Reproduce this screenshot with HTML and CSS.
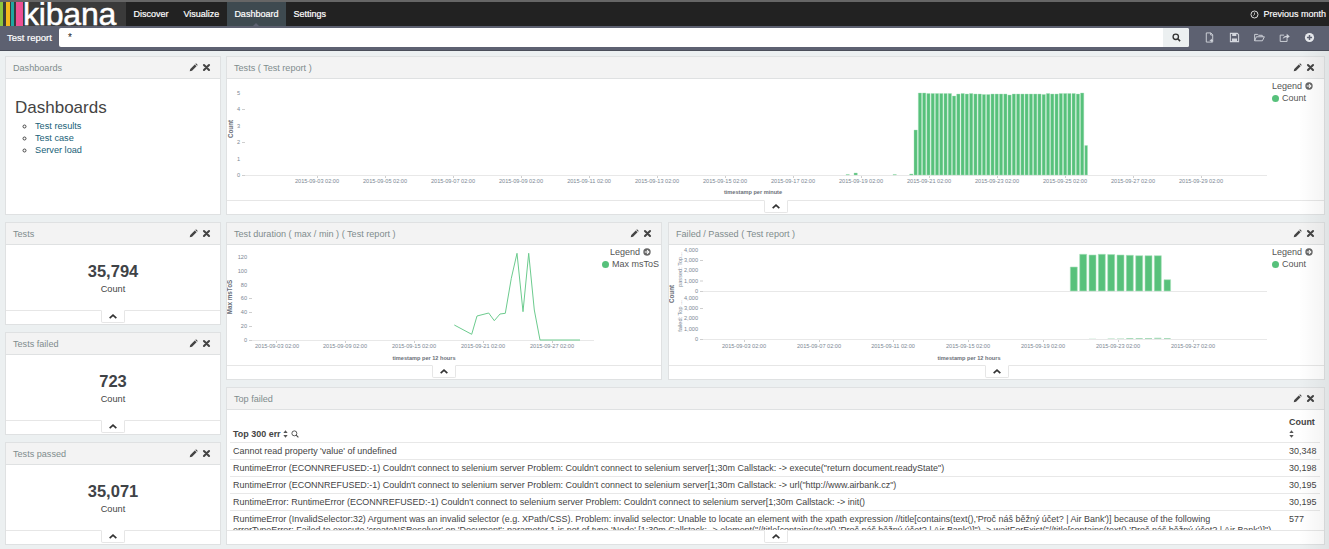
FILE: index.html
```html
<!DOCTYPE html>
<html lang="en">
<head>
<meta charset="utf-8">
<title>Test report - Kibana</title>
<link rel="stylesheet" href="styles.css">
</head>
<body>
<svg class="defs" width="0" height="0">
  <symbol id="pencil" viewBox="0 0 10 10"><path d="M0.8 9.2 1.4 6.6 6.4 1.6 8.4 3.6 3.4 8.6Z M7 1 7.8.3 9.7 2.2 9 3Z" fill="#444"/></symbol>
  <symbol id="times" viewBox="0 0 10 10"><path d="M2.2 2.2 7.800 7.800M7.800 2.200 2.200 7.800" stroke="#444" stroke-width="2.300" stroke-linecap="round"/></symbol>
  <symbol id="chev" viewBox="0 0 12 8"><path d="M2 6 6 2.4 10 6" fill="none" stroke="#333" stroke-width="2"/></symbol>
  <symbol id="legend-arrow" viewBox="0 0 10 10"><circle cx="5" cy="5" r="4.6" fill="#666"/><path d="M2.2 5H7M5 2.8 7.3 5 5 7.2" fill="none" stroke="#fff" stroke-width="1.3"/></symbol>
</svg>

<nav class="nav">
  <div class="logo">
    <span class="stripe s1"></span><span class="stripe s2"></span><span class="stripe s3"></span><span class="stripe s4"></span>
    <span class="wordmark">kibana</span>
  </div>
  <a class="nav-link">Discover</a>
  <a class="nav-link">Visualize</a>
  <a class="nav-link active">Dashboard</a>
  <a class="nav-link">Settings</a>
  <div class="time">
    <svg class="clock" viewBox="0 0 10 10"><circle cx="5" cy="5" r="3.9" fill="none" stroke="#ddd" stroke-width="1.1"/><path d="M5 2.8V5L3.6 6.2" fill="none" stroke="#ddd" stroke-width=".9"/></svg>
    <span>Previous month</span>
  </div>
</nav>

<div class="subbar">
  <span class="dash-name">Test report</span>
  <div class="search">
    <span class="query">*</span>
    <span class="search-btn"><svg class="search-icon" viewBox="0 0 10 10"><circle cx="4.2" cy="4.2" r="3" fill="none" stroke="#333" stroke-width="1.5"/><path d="M6.4 6.4 9 9" stroke="#333" stroke-width="1.8"/></svg></span>
  </div>
  <div class="tools">
    <svg class="tool" viewBox="0 0 12 12"><path d="M2.5 1H7.5L9.5 3V11H2.5Z M7.3 1V3.3H9.5" fill="none" stroke="#d3d6dd" stroke-width="1"/><path d="M8 7.5V11M6.3 9.2H9.8" stroke="#d3d6dd" stroke-width="1"/></svg>
    <svg class="tool" viewBox="0 0 12 12"><path d="M1.5 1.5H9L10.5 3V10.5H1.5Z" fill="none" stroke="#d3d6dd" stroke-width="1.1"/><path d="M3.5 1.5H8V4.4H3.5ZM3.2 7H8.8V10.5H3.2Z" fill="#d3d6dd"/></svg>
    <svg class="tool" viewBox="0 0 12 12"><path d="M.7 9.6V2.6H4L5 3.6H9V5.2M.7 9.6H9.2L11.3 5.2H2.6Z" fill="none" stroke="#d3d6dd" stroke-width="1"/></svg>
    <svg class="tool" viewBox="0 0 12 12"><path d="M8.8 7V10.3H1.3V3.4H5.6" fill="none" stroke="#d3d6dd" stroke-width="1"/><path d="M4 7.6C4.6 5.2 6.5 4 8.4 4V2L11.7 4.8 8.4 7.4V5.6C6.6 5.6 5.2 6.2 4 7.6Z" fill="#d3d6dd"/></svg>
    <svg class="tool" viewBox="0 0 12 12"><circle cx="6" cy="6" r="5" fill="#e6e8ec"/><path d="M6 3.2V8.8M3.2 6H8.8" stroke="#5d6171" stroke-width="1.6"/></svg>
  </div>
</div>

<main class="grid">
  <section class="panel">
    <header class="panel-head"><span>Dashboards</span><span class="acts"><svg class="act"><use href="#pencil"/></svg><svg class="act"><use href="#times"/></svg></span></header>
    <div class="markdown">
      <h1>Dashboards</h1>
      <ul>
        <li><a>Test results</a></li>
        <li><a>Test case</a></li>
        <li><a>Server load</a></li>
      </ul>
    </div>
  </section>

  <section class="panel span2">
    <header class="panel-head"><span>Tests ( Test report )</span><span class="acts"><svg class="act"><use href="#pencil"/></svg><svg class="act"><use href="#times"/></svg></span></header>
    <div class="vis">
      <svg class="chart" width="1041" height="121" viewBox="227 79 1041 121">
        <g class="tick-marks"><path d="M242 109.500h3M242 142.500h3M242 175.500h3M861.500 175v3M929.500 175v3M997.500 175v3M1065.500 175v3M1133.500 175v3M1201.500 175v3M317.500 175v3M385.500 175v3M453.500 175v3M521.500 175v3M589.500 175v3M657.500 175v3M725.500 175v3M793.500 175v3"/></g>
        <path class="axis" d="M245 175.500H1267"/>
        <g class="ylab">
          <text x="240" y="95">5</text><text x="240" y="111">4</text><text x="240" y="128">3</text><text x="240" y="144">2</text><text x="240" y="161">1</text><text x="240" y="177">0</text>
        </g>
        <g class="xlab">
          <text x="317" y="183">2015-09-03 02:00</text><text x="385" y="183">2015-09-05 02:00</text><text x="453" y="183">2015-09-07 02:00</text><text x="521" y="183">2015-09-09 02:00</text><text x="589" y="183">2015-09-11 02:00</text><text x="657" y="183">2015-09-13 02:00</text><text x="725" y="183">2015-09-15 02:00</text><text x="793" y="183">2015-09-17 02:00</text><text x="861" y="183">2015-09-19 02:00</text><text x="929" y="183">2015-09-21 02:00</text><text x="997" y="183">2015-09-23 02:00</text><text x="1065" y="183">2015-09-25 02:00</text><text x="1133" y="183">2015-09-27 02:00</text><text x="1201" y="183">2015-09-29 02:00</text>
        </g>
        <text class="atitle" x="753" y="194">timestamp per minute</text>
        <text class="atitle rot" transform="translate(233 129) rotate(-90)">Count</text>
        <path class="bars" d="M854 175V173h3.300V175zM846 175V174.500h3.300V175zM893 175V174.500h3.300V175zM909.700 175V174h3.300V175zM914 175V130h3.300V175zM918.300 175V93h3.300V175zM922.500 175V93h3.300V175zM926.800 175V93.500h3.300V175zM931.100 175V93.500h3.300V175zM935.400 175V93.500h3.300V175zM939.600 175V93.500h3.300V175zM943.900 175V93.500h3.300V175zM948.200 175V93.500h3.300V175zM952.400 175V96h3.300V175zM956.700 175V94h3.300V175zM961 175V93.500h3.300V175zM965.200 175V94h3.300V175zM969.500 175V93.500h3.300V175zM973.800 175V94h3.300V175zM978.100 175V94h3.300V175zM982.300 175V94.500h3.300V175zM986.600 175V94.500h3.300V175zM990.900 175V94h3.300V175zM995.100 175V94h3.300V175zM999.400 175V94h3.300V175zM1003.700 175V94h3.300V175zM1007.900 175V95h3.300V175zM1012.200 175V94h3.300V175zM1016.500 175V94h3.300V175zM1020.800 175V94h3.300V175zM1025 175V94h3.300V175zM1029.300 175V94h3.300V175zM1033.600 175V94h3.300V175zM1037.800 175V94h3.300V175zM1042.100 175V94.500h3.300V175zM1046.400 175V93.500h3.300V175zM1050.600 175V94h3.300V175zM1054.900 175V94h3.300V175zM1059.200 175V93.500h3.300V175zM1063.500 175V93.500h3.300V175zM1067.700 175V93.500h3.300V175zM1072 175V93.500h3.300V175zM1076.300 175V94h3.300V175zM1080.500 175V93h3.300V175zM1084.800 175V145.500h2.700V175z"/>
      </svg>
      <div class="legend"><div class="legend-title">Legend <svg class="larrow"><use href="#legend-arrow"/></svg></div><div class="legend-item"><i class="dot"></i>Count</div></div>
    </div>
    <div class="spy"><span class="tab"><svg class="chev"><use href="#chev"/></svg></span></div>
  </section>

  <div class="metrics">
    <section class="panel">
      <header class="panel-head"><span>Tests</span><span class="acts"><svg class="act"><use href="#pencil"/></svg><svg class="act"><use href="#times"/></svg></span></header>
      <div class="metric"><b>35,794</b><span>Count</span></div>
      <div class="spy"><span class="tab"><svg class="chev"><use href="#chev"/></svg></span></div>
    </section>
    <section class="panel">
      <header class="panel-head"><span>Tests failed</span><span class="acts"><svg class="act"><use href="#pencil"/></svg><svg class="act"><use href="#times"/></svg></span></header>
      <div class="metric"><b>723</b><span>Count</span></div>
      <div class="spy"><span class="tab"><svg class="chev"><use href="#chev"/></svg></span></div>
    </section>
    <section class="panel">
      <header class="panel-head"><span>Tests passed</span><span class="acts"><svg class="act"><use href="#pencil"/></svg><svg class="act"><use href="#times"/></svg></span></header>
      <div class="metric"><b>35,071</b><span>Count</span></div>
      <div class="spy"><span class="tab"><svg class="chev"><use href="#chev"/></svg></span></div>
    </section>
  </div>

  <section class="panel narrow">
    <header class="panel-head"><span>Test duration ( max / min ) ( Test report )</span><span class="acts"><svg class="act"><use href="#pencil"/></svg><svg class="act"><use href="#times"/></svg></span></header>
    <div class="vis">
      <svg class="chart" width="370" height="120" viewBox="227 245 370 120">
        <g class="tick-marks"><path d="M249 298.500h3M249 312.500h3M249 326.500h3M249 340.500h3M276.500 340v3M345.500 340v3M414.500 340v3M483.500 340v3M552.500 340v3"/></g>
        <path class="axis" d="M252 340.500H594"/>
        <g class="ylab">
          <text x="247" y="259">120</text><text x="247" y="273">100</text><text x="247" y="287">80</text><text x="247" y="300">60</text><text x="247" y="314">40</text><text x="247" y="328">20</text><text x="247" y="342">0</text>
        </g>
        <g class="xlab">
          <text x="277" y="348">2015-09-03 02:00</text><text x="345" y="348">2015-09-09 02:00</text><text x="414" y="348">2015-09-15 02:00</text><text x="483" y="348">2015-09-21 02:00</text><text x="552" y="348">2015-09-27 02:00</text>
        </g>
        <text class="atitle" x="424" y="359.500">timestamp per 12 hours</text>
        <text class="atitle rot" transform="translate(232 297) rotate(-90)">Max msToS</text>
        <polyline class="line" points="454.300,325 471.700,334.300 477,316 488.700,313 494.300,320.700 500,314 505.300,313.300 511.300,278.300 517,253.300 523,311.700 528.700,253.300 534.300,310 540,340 580,340"/>
      </svg>
      <div class="legend centered"><div class="legend-title">Legend <svg class="larrow"><use href="#legend-arrow"/></svg></div><div class="legend-item"><i class="dot"></i>Max msToS</div></div>
    </div>
    <div class="spy"><span class="tab"><svg class="chev"><use href="#chev"/></svg></span></div>
  </section>

  <section class="panel">
    <header class="panel-head"><span>Failed / Passed ( Test report )</span><span class="acts"><svg class="act"><use href="#pencil"/></svg><svg class="act"><use href="#times"/></svg></span></header>
    <div class="vis">
      <svg class="chart" width="600" height="120" viewBox="669 245 600 120">
        <g class="tick-marks"><path d="M700 260.500h3M700 281h3M700 291.500h3M700 308.500h3M700 339.500h3M744.500 339v3M819.500 339v3M893.500 339v3M968.500 339v3M1043.500 339v3M1118.500 339v3M1193.500 339v3"/></g>
        <path class="axis" d="M703 291.500H1267M703 339.500H1267"/>
        <g class="ylab">
          <text x="698" y="252">4,000</text><text x="698" y="262">3,000</text><text x="698" y="272">2,000</text><text x="698" y="283">1,000</text><text x="698" y="293">0</text>
          <text x="698" y="300">4,000</text><text x="698" y="310">3,000</text><text x="698" y="320">2,000</text><text x="698" y="331">1,000</text><text x="698" y="341">0</text>
        </g>
        <g class="xlab">
          <text x="744" y="348">2015-09-03 02:00</text><text x="819" y="348">2015-09-07 02:00</text><text x="893" y="348">2015-09-11 02:00</text><text x="968" y="348">2015-09-15 02:00</text><text x="1043" y="348">2015-09-19 02:00</text><text x="1118" y="348">2015-09-23 02:00</text><text x="1193" y="348">2015-09-27 02:00</text>
        </g>
        <text class="atitle" x="969" y="359.500">timestamp per 12 hours</text>
        <text class="atitle rot" transform="translate(674 294) rotate(-90)">Count</text>
        <text class="side" transform="translate(682 269.500) rotate(-90)">passed: Top...</text>
        <text class="side" transform="translate(682 316) rotate(-90)">failed: Top ...</text>
        <path class="bars wide" d="M1070.300 291V267h7V291zM1079.700 291V254.300h7V291zM1089 291V255h7V291zM1098.300 291V254.300h7V291zM1107.700 291V254.600h7V291zM1117 291V255h7V291zM1126.300 291V255.300h7V291zM1135.700 291V255.700h7V291zM1145 291V255.700h7V291zM1154.300 291V255.700h7V291zM1164 291V279.700h6.600V291z"/>
        <path class="bars-low" d="M1117 339V338.400h7V339zM1126.300 339V338h7V339zM1135.700 339V338h7V339zM1145 339V338h7V339zM1154.300 339V337.800h7V339zM1164 339V338h6.600V339zM1107.700 339V338.600h7V339zM1089 339V338.700h7V339z"/>
      </svg>
      <div class="legend"><div class="legend-title">Legend <svg class="larrow"><use href="#legend-arrow"/></svg></div><div class="legend-item"><i class="dot"></i>Count</div></div>
    </div>
    <div class="spy"><span class="tab"><svg class="chev"><use href="#chev"/></svg></span></div>
  </section>

  <section class="panel span2">
    <header class="panel-head"><span>Top failed</span><span class="acts"><svg class="act"><use href="#pencil"/></svg><svg class="act"><use href="#times"/></svg></span></header>
    <div class="table-wrap">
      <table>
        <thead>
          <tr>
            <th>Top 300 err <svg class="sort" viewBox="0 0 6 9"><path d="M3 0 5.600 3.400H.4ZM3 9 .4 5.600H5.600Z" fill="#555"/></svg> <svg class="find" viewBox="0 0 10 10"><circle cx="4.200" cy="4.200" r="3.100" fill="none" stroke="#444" stroke-width="1.100"/><path d="M6.500 6.500 9.200 9.200" stroke="#444" stroke-width="1.300"/></svg></th>
            <th class="count">Count<br><svg class="sort" viewBox="0 0 6 9"><path d="M3 0 5.600 3.400H.4ZM3 9 .4 5.600H5.600Z" fill="#555"/></svg></th>
          </tr>
        </thead>
        <tbody>
          <tr><td>Cannot read property 'value' of undefined</td><td>30,348</td></tr>
          <tr><td>RuntimeError (ECONNREFUSED:-1) Couldn't connect to selenium server Problem: Couldn't connect to selenium server[1;30m Callstack: -&gt; execute("return document.readyState")</td><td>30,198</td></tr>
          <tr><td>RuntimeError (ECONNREFUSED:-1) Couldn't connect to selenium server Problem: Couldn't connect to selenium server[1;30m Callstack: -&gt; url("http://www.airbank.cz")</td><td>30,195</td></tr>
          <tr><td>RuntimeError: RuntimeError (ECONNREFUSED:-1) Couldn't connect to selenium server Problem: Couldn't connect to selenium server[1;30m Callstack: -&gt; init()</td><td>30,195</td></tr>
          <tr><td>RuntimeError (InvalidSelector:32) Argument was an invalid selector (e.g. XPath/CSS). Problem: invalid selector: Unable to locate an element with the xpath expression //title[contains(text(),'Proč náš běžný účet? | Air Bank')] because of the following<br>errorTypeError: Failed to execute 'createNSResolver' on 'Document': parameter 1 is not of type 'Node'.[1;30m Callstack: -&gt; element("//title[contains(text(),'Proč náš běžný účet? | Air Bank')]") -&gt; waitForExist("//title[contains(text(),'Proč náš běžný účet? | Air Bank')]")</td><td>577</td></tr>
        </tbody>
      </table>
    </div>
    <div class="spy"><span class="tab"><svg class="chev"><use href="#chev"/></svg></span></div>
  </section>
</main>
<div class="edge-shade"></div>
</body>
</html>
```

FILE: styles.css
```css
* { box-sizing: border-box; }
html, body { margin: 0; padding: 0; height: 549px; overflow: hidden; }
body { background: #ecf0f1; font-family: "Liberation Sans", Arial, sans-serif; color: #444; position: relative; }
.defs { position: absolute; }

.nav { height: 26px; background: #222; border-top: 2px solid #666; display: flex; align-items: stretch; color: #fff; font-size: 9px; }
.logo { width: 126px; background: #3a3a3a; display: flex; overflow: hidden; }
.stripe { display: block; height: 24px; flex: none; }
.s1 { width: 3px; margin-right: 3px; background: #8cc63f; }
.s2 { width: 4px; margin-right: 1px; background: #f5b91c; }
.s3 { width: 3px; margin-right: 2px; background: #1fa7a2; }
.s4 { width: 6.500px; background: #ee4f93; }
.wordmark { color: #fff; font-size: 32px; line-height: 25px; padding-left: .5px; -webkit-text-stroke: .5px #fff; letter-spacing: -.2px; height: 24px; }
.nav-link { display: flex; align-items: center; padding: 0 7.500px; -webkit-text-stroke: .2px #fff; position: relative; }
.nav-link.active { background: #3e4a50; }
.nav-link.active::after { content: ""; position: absolute; left: 50%; bottom: 0; margin-left: -3px; border: 3px solid transparent; border-top: 0; border-bottom-color: #5d6171; }
.time { margin-left: auto; display: flex; align-items: center; gap: 4px; padding-right: 3px; -webkit-text-stroke: .15px #fff; }
.clock { width: 9px; height: 9px; }

.subbar { height: 25px; background: #5d6171; border-bottom: 1px solid #4a4e59; display: flex; align-items: center; padding: 0 0 1px 7px; }
.dash-name { width: 52px; color: #fff; font-size: 9.500px; -webkit-text-stroke: .2px #fff; }
.search { width: 1130px; height: 19px; background: #fff; border-radius: 2px; display: flex; align-items: center; justify-content: space-between; padding-left: 9px; font-size: 10px; color: #222; }
.search-btn { width: 26px; height: 19px; background: #ecf0f1; border-radius: 0 2px 2px 0; display: flex; align-items: center; justify-content: center; }
.search-icon { width: 9px; height: 9px; }
.tools { display: flex; gap: 14px; margin-left: 15px; }
.tool { width: 11px; height: 11px; }

.grid { display: grid; grid-template-columns: 216px 437px 657px; grid-template-rows: 159px 158px 158px; column-gap: 5px; row-gap: 7px; padding: 5px 0 0 5px; }
.span2 { grid-column: 2 / 4; }
.metrics { grid-column: 1; grid-row: 2 / 4; display: flex; flex-direction: column; gap: 7px; }
.metrics .panel { height: 103px; }
.narrow { margin-right: 1px; }

.panel { background: #fff; border: 1px solid #dfe1e2; display: flex; flex-direction: column; min-width: 0; overflow: hidden; }
.panel-head { height: 22px; flex: none; background: #f3f3f3; border-bottom: 1px solid #dfe1e2; display: flex; align-items: center; justify-content: space-between; padding: 0 9px 0 7px; font-size: 9.100px; color: #7f8c8d; }
.acts { display: flex; gap: 4px; }
.act { width: 9px; height: 9px; }

.markdown { padding: 19px 9px 0; }
.markdown h1 { margin: 0 0 2.500px; font-size: 17px; font-weight: 400; line-height: 19px; color: #444; }
.markdown ul { margin: 0; padding: 0 0 0 20px; list-style: circle; font-size: 9.200px; line-height: 12px; }
.markdown a { color: #205f78; }

.vis { flex: 1; display: flex; min-height: 0; }
.chart { display: block; flex: none; font-family: "Liberation Sans", Arial, sans-serif; }
.axis { fill: none; stroke: #e8e8e8; stroke-width: 1; }
.tick-marks path { fill: none; stroke: #cfcfcf; stroke-width: 1; }
.ylab text { font-size: 5.600px; fill: #7c8794; text-anchor: end; }
.xlab text { font-size: 5.600px; fill: #7c8794; text-anchor: middle; }
.atitle { font-size: 5.600px; font-weight: 700; fill: #6b6f78; text-anchor: middle; }
.atitle.rot { font-size: 6.300px; }
.side { font-size: 5.600px; fill: #7c8794; text-anchor: middle; }
.bars { fill: #57c17b; stroke: #a9e0bc; stroke-width: .4; }
.bars.wide { stroke-width: .6; }
.bars-low { fill: #a9dcbb; }
.line { fill: none; stroke: #6ccb8e; stroke-width: 1; }

.legend { margin-left: auto; padding: .5px 11px 0 0; font-size: 9px; color: #555; line-height: 12.500px; white-space: nowrap; flex: none; display: flex; flex-direction: column; align-items: flex-start; }
.legend.centered { padding-right: 2px; align-items: center; }
.legend-title { display: flex; align-items: center; gap: 3px; }
.legend-item { display: flex; align-items: center; gap: 3px; }
.dot { width: 7px; height: 7px; border-radius: 50%; background: #57c17b; flex: none; }
.larrow { width: 8px; height: 8px; }

.spy { flex: none; height: 14px; border-top: 1px solid #e6e6e6; display: flex; justify-content: center; background: #fff; }
.tab { width: 24px; height: 13px; margin-top: -1px; background: #fff; border: 1px solid #e6e6e6; border-top-color: #fff; border-radius: 0 0 2px 2px; display: flex; align-items: center; justify-content: center; }
.chev { width: 10px; height: 7px; }

.metric { flex: 1; display: flex; flex-direction: column; align-items: center; padding-top: 16.500px; }
.metric b { font-size: 16.500px; line-height: 19px; color: #3f4347; }
.metric span { font-size: 9.200px; line-height: 16px; color: #444; }

.table-wrap { flex: 1; min-height: 0; overflow: hidden; padding: 0 4px 0 3px; }
table { width: 100%; border-collapse: collapse; font-size: 8.960px; color: #444; }
th { text-align: left; font-weight: 700; vertical-align: bottom; height: 32px; padding: 0 3px 2px 3px; line-height: 12px; }
td { border-top: 1px solid #e8e8e8; padding: 3px 3px 2px 3px; line-height: 11px; vertical-align: top; }
td:last-child, th.count { width: 34px; padding-right: 0; }
.sort { width: 5px; height: 8px; vertical-align: -1px; }
.find { width: 8px; height: 8px; vertical-align: -1px; }

.edge-shade { position: absolute; top: 51px; right: 0; width: 30px; bottom: 0; background: linear-gradient(to right, rgba(0,0,0,0), rgba(0,0,0,.05)); pointer-events: none; }
```
